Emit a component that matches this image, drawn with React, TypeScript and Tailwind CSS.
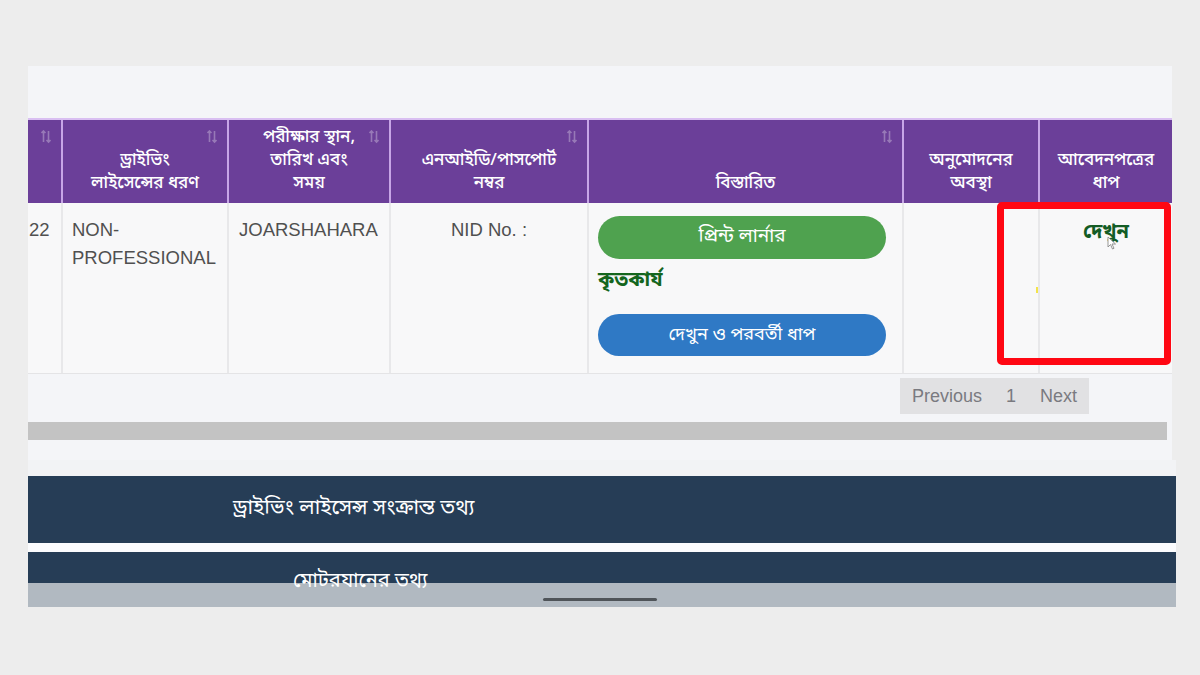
import React from 'react';

const bn = { fontFamily: '"Noto Sans Bengali", "Noto Sans", "Liberation Sans", sans-serif' };
const lat = { fontFamily: '"Liberation Sans", Arial, sans-serif' };

function SortIcon() {
    return (
        <svg width="10" height="14" viewBox="0 0 10 14" className="absolute top-[10px] right-[10px]">
            <path d="M2.5 1 L2.5 12 M0.5 3 L2.5 1 L4.5 3" stroke="rgba(255,255,255,0.3)" strokeWidth="1.6" fill="none" />
            <path d="M7.5 1 L7.5 12 M5.5 10 L7.5 12 L9.5 10" stroke="rgba(255,255,255,0.3)" strokeWidth="1.6" fill="none" />
        </svg>
    );
}

const headers: { lines: string[]; sort: boolean }[] = [
    { lines: [], sort: true },
    { lines: ['ড্রাইভিং', 'লাইসেন্সের ধরণ'], sort: true },
    { lines: ['পরীক্ষার স্থান,', 'তারিখ এবং', 'সময়'], sort: true },
    { lines: ['এনআইডি/পাসপোর্ট', 'নম্বর'], sort: true },
    { lines: ['বিস্তারিত'], sort: true },
    { lines: ['অনুমোদনের', 'অবস্থা'], sort: false },
    { lines: ['আবেদনপত্রের', 'ধাপ'], sort: false },
];

export default function App() {
    return (
        <div className="w-[1200px] h-[675px] bg-[#ededed] overflow-hidden pt-[66px]">
            <div className="ml-[28px] w-[1144px] bg-[#f4f5f8]">
                <div className="h-[52px]" />

                {/* table header */}
                <div className="grid grid-cols-[33px_166px_162px_198px_315px_136px_134px] h-[85px] bg-[#6b3f99] border-t-2 border-[#d9bff2]">
                    {headers.map((h, i) => (
                        <div key={i} className={`relative flex flex-col justify-end items-center pb-[8px] text-white text-[17px] font-medium leading-[23px] whitespace-nowrap ${i > 0 ? 'border-l-2 border-[#c7a6e6]' : ''}`} style={bn}>
                            {h.sort && <SortIcon />}
                            {h.lines.map((l) => <span key={l}>{l}</span>)}
                        </div>
                    ))}
                </div>

                {/* table row */}
                <div className="relative grid grid-cols-[33px_166px_162px_198px_315px_136px_134px] h-[171px] bg-[#f8f8f9] border-b border-[#e4e4e6] text-[18.5px] text-[#505050] leading-[28px]" style={lat}>
                    <div className="pt-[13px] pl-[1px]">22</div>
                    <div className="border-l-2 border-[#e8e8ea] pt-[13px] pl-[9px]">NON-<br />PROFESSIONAL</div>
                    <div className="border-l-2 border-[#e8e8ea] pt-[13px] pl-[10px]">JOARSHAHARA</div>
                    <div className="border-l-2 border-[#e8e8ea] pt-[13px] text-center">NID No. :</div>
                    <div className="border-l-2 border-[#e8e8ea] pt-[13px] px-[9px] flex flex-col" style={bn}>
                        <div className="w-[288px] h-[43px] rounded-full bg-[#4fa24f] text-white text-[19px] flex items-center justify-center">প্রিন্ট লার্নার</div>
                        <div className="mt-[9px] text-[#14661e] font-bold text-[20px] leading-[27px]">কৃতকার্য</div>
                        <div className="mt-[19px] w-[288px] h-[42px] rounded-full bg-[#2f79c5] text-white text-[18px] flex items-center justify-center">দেখুন ও পরবর্তী ধাপ</div>
                    </div>
                    <div className="border-l-2 border-[#e8e8ea] relative">
                        <span className="absolute left-[132px] top-[84px] w-[2px] h-[6px] bg-[#f3e34a]" />
                    </div>
                    <div className="border-l-2 border-[#e8e8ea] pt-[16px] text-center" style={bn}>
                        <span className="relative text-[#135c25] font-bold text-[20px]">
                            দেখুন
                            <svg width="10" height="14" viewBox="0 0 10 14" className="absolute left-[24px] top-[16px]">
                                <path d="M1 1 L1 11 L3.5 8.5 L5.5 13 L7 12.3 L5 8 L8.5 8 Z" fill="#ffffff" stroke="#8a8a8a" strokeWidth="0.9" />
                            </svg>
                        </span>
                    </div>

                    {/* highlight */}
                    <div className="absolute left-[969px] top-[-1px] w-[174px] h-[163px] border-[7px] border-[#ff0713] rounded-[5px] pointer-events-none" />
                </div>

                {/* pagination */}
                <div className="flex justify-end pr-[83px] pt-[4px]">
                    <div className="h-[36px] w-[189px] bg-[#e1e1e3] flex items-center gap-[24px] pl-[12px] text-[18px] text-[#7a7a80]" style={lat}>
                        <span>Previous</span>
                        <span>1</span>
                        <span>Next</span>
                    </div>
                </div>

                {/* scrollbar */}
                <div className="mt-[8px] w-[1139px] h-[18px] bg-[#c3c3c3]" />
                <div className="h-[20px]" />
            </div>

            <div className="ml-[28px] w-[1148px] h-[16px] bg-[#f2f3f5]" />

            {/* info bands */}
            <div className="ml-[28px] w-[1148px]">
                <div className="h-[67px] bg-[#263d56] flex items-center pl-[205px] text-white text-[21px]" style={bn}>
                    ড্রাইভিং লাইসেন্স সংক্রান্ত তথ্য
                </div>
                <div className="h-[9px] bg-[#fbfcfe]" />
                <div className="h-[31px] bg-[#263d56]" />
                <div className="relative h-[24px] bg-[#b1b9c1]">
                    <span className="absolute left-[265px] top-[-14px] text-white text-[20px] leading-[26px]" style={bn}>মোটরযানের তথ্য</span>
                    <span className="absolute left-[515px] top-[15px] w-[114px] h-[3px] rounded-full bg-[#4f5459]" />
                </div>
            </div>
        </div>
    );
}
